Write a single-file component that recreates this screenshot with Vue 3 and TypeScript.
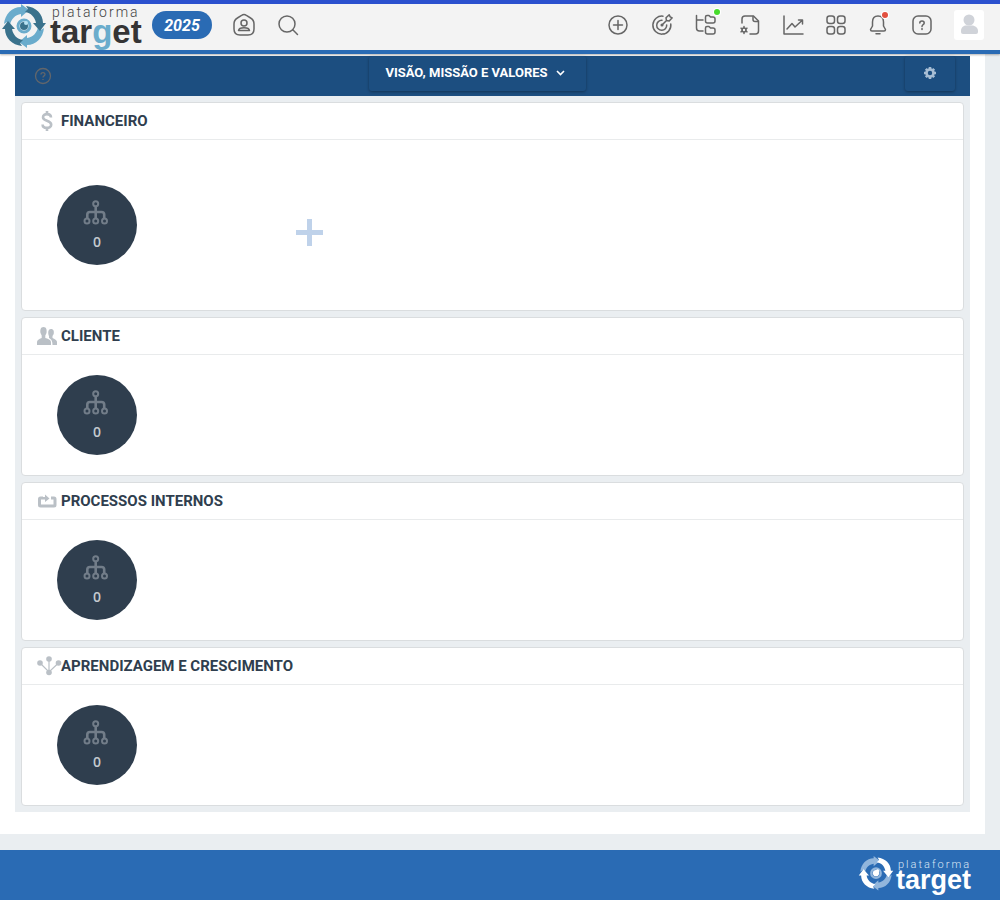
<script setup lang="ts">
type IconName = 'money' | 'people' | 'process' | 'growth'

interface Perspective {
  title: string
  icon: IconName
  count: number
  tall?: boolean
}

const year = '2025'

const perspectives: Perspective[] = [
  { title: 'FINANCEIRO', icon: 'money', count: 0, tall: true },
  { title: 'CLIENTE', icon: 'people', count: 0 },
  { title: 'PROCESSOS INTERNOS', icon: 'process', count: 0 },
  { title: 'APRENDIZAGEM E CRESCIMENTO', icon: 'growth', count: 0 },
]
</script>

<template>
  <div class="page">
    <svg class="defs" width="0" height="0" aria-hidden="true">
      <symbol id="mark" viewBox="0 0 48 46">
        <g class="mark-light">
          <path d="M4 20C5 10 12 3 21 3V0L29 6L21 13V10C15 11 11 15 10 21L7 18Z" />
          <path transform="rotate(180 24 22)" d="M4 20C5 10 12 3 21 3V0L29 6L21 13V10C15 11 11 15 10 21L7 18Z" />
        </g>
        <g class="mark-dark">
          <path transform="rotate(90 24 22)" d="M4 20C5 10 12 3 21 3V0L29 6L21 13V10C15 11 11 15 10 21L7 18Z" />
          <path transform="rotate(270 24 22)" d="M4 20C5 10 12 3 21 3V0L29 6L21 13V10C15 11 11 15 10 21L7 18Z" />
        </g>
        <circle class="eye-ring" cx="24" cy="22" r="6" />
        <circle class="eye-core" cx="24" cy="22" r="4" />
        <circle class="eye-spark" cx="26" cy="19" r="2" />
      </symbol>
    </svg>

    <header class="topbar">
      <a class="logo" href="#" aria-label="plataforma target">
        <svg width="148" height="46" viewBox="0 0 148 46">
          <use href="#mark" x="0" y="0" width="48" height="46" />
          <text class="logo-small" x="52" y="13">plataforma</text>
          <text class="logo-big" x="50" y="39">tar<tspan class="logo-g">g</tspan>et</text>
        </svg>
      </a>
      <button class="year" type="button">{{ year }}</button>
      <nav class="left-nav" aria-label="Principal">
        <button class="icon-btn" type="button" aria-label="Início">
          <svg width="24" height="24" viewBox="0 0 24 24">
            <path d="M9.6 2.4Q12 .8 14.4 2.4L18.600 5Q22 7 22 11V16Q22 22 16 22H8Q2 22 2 16V11Q2 7 5.400 5Z" />
            <circle cx="12" cy="10" r="3" />
            <path d="M6.500 17.500C7 13.800 17 13.800 17.500 17.500Z" />
          </svg>
        </button>
        <button class="icon-btn" type="button" aria-label="Pesquisar">
          <svg width="24" height="24" viewBox="0 0 24 24">
            <circle cx="11" cy="11" r="8" /><path d="M16.800 16.800l4.700 4.700" />
          </svg>
        </button>
      </nav>
      <nav class="right-nav" aria-label="Ferramentas">
        <button class="icon-btn" type="button" aria-label="Adicionar">
          <svg width="24" height="24" viewBox="0 0 24 24">
            <circle cx="12" cy="12" r="9" /><path d="M12 7.500v9M7.500 12h9" />
          </svg>
        </button>
        <button class="icon-btn" type="button" aria-label="Metas">
          <svg width="24" height="24" viewBox="0 0 24 24">
            <path d="M13 3.200A9 9 0 1 0 20.800 11" />
            <path d="M12 7.300A5 5 0 1 0 16.700 12" />
            <path d="M12 12l4.500-4.500M16.500 7.500L16 4.800L19.200 1.800L20.200 3.800L22.200 4.800L19.200 8Z" />
            <circle cx="12" cy="12" r=".8" />
          </svg>
        </button>
        <button class="icon-btn" type="button" aria-label="Estrutura">
          <svg width="24" height="24" viewBox="0 0 24 24">
            <path d="M2.500 2.500V15Q2.500 18 5.500 18H9M2.500 7H9" />
            <path d="M11.500 4Q11.500 2.500 13 2.500H15L16.500 4H19Q21 4 21 6V8Q21 10 19 10H13.500Q11.500 10 11.500 8Z" />
            <path d="M11.500 15Q11.500 13.500 13 13.500H15L16.500 15H19Q21 15 21 17V19Q21 21 19 21H13.500Q11.500 21 11.500 19Z" />
          </svg>
          <span class="dot green"></span>
        </button>
        <button class="icon-btn" type="button" aria-label="Documentos">
          <svg width="24" height="24" viewBox="0 0 24 24">
            <path d="M4 10V6Q4 3 7 3H15.500L20.500 8V18Q20.500 21 17.500 21H12" />
            <path d="M15 3.500V6.500Q15 8.500 17 8.500H20" />
            <circle cx="6" cy="17" r="2" />
            <path d="M6 13.500V15M6 19v1.500M3 15.200l1.300.8M7.700 18l1.300.8M3 18.800l1.300-.8M7.700 16l1.300-.8" />
          </svg>
        </button>
        <button class="icon-btn narrow" type="button" aria-label="Indicadores">
          <svg width="22" height="24" viewBox="0 0 22 24">
            <path d="M2 3V21H21" />
            <path d="M5 16L10 10.500L13 14L20 7.500M16.500 7H20.500V11" />
          </svg>
        </button>
        <button class="icon-btn" type="button" aria-label="Aplicativos">
          <svg width="24" height="24" viewBox="0 0 24 24">
            <rect x="3" y="3" width="7.500" height="7.500" rx="2.500" />
            <rect x="13.500" y="3" width="7.500" height="7.500" rx="2.500" />
            <rect x="3" y="13.500" width="7.500" height="7.500" rx="2.500" />
            <rect x="13.500" y="13.500" width="7.500" height="7.500" rx="2.500" />
          </svg>
        </button>
        <button class="icon-btn narrow" type="button" aria-label="Notificações">
          <svg width="22" height="24" viewBox="0 0 22 24">
            <path d="M10 3C6 3 4.500 6 4.500 9V13L2.500 16.500Q2.500 18 4 18H16Q17.500 18 17.500 16.500L15.500 13V9C15.500 6 14 3 10 3ZM8 20.800h4" />
          </svg>
          <span class="dot red"></span>
        </button>
        <button class="icon-btn" type="button" aria-label="Ajuda">
          <svg width="24" height="24" viewBox="0 0 24 24">
            <rect x="3" y="3" width="18" height="18" rx="5" />
            <path d="M9.800 10C9.800 7.200 14.200 7.200 14.200 10C14.200 11.800 12 11.500 12 13.500M12 15.500V16.500" />
          </svg>
        </button>
        <button class="avatar" type="button" aria-label="Perfil">
          <svg width="30" height="30" viewBox="0 0 30 30">
            <path d="M7 21C7 17 10 15.500 12 15.500H18C20 15.500 24 17 24 21V22Q24 24 22 24H9Q7 24 7 22Z" />
            <circle cx="15" cy="10" r="5.500" />
          </svg>
        </button>
      </nav>
    </header>

    <main class="content">
      <div class="toolbar">
        <button class="help" type="button" aria-label="Ajuda do mapa">
          <svg width="18" height="18" viewBox="0 0 18 18">
            <circle cx="9" cy="9" r="7.500" />
            <path d="M7 7.500C7 5 11 5 11 7.500C11 9 9 8.800 9 10.500M9 12V13" />
          </svg>
        </button>
        <button class="flat vision" type="button">
          VISÃO, MISSÃO E VALORES
          <svg width="9" height="6" viewBox="0 0 9 6"><path d="M1 1l3.500 3.500L8 1" /></svg>
        </button>
        <button class="flat settings" type="button" aria-label="Configurações">
          <svg width="12" height="12" viewBox="0 0 12 12">
            <circle cx="6" cy="6" r="3.500" />
            <path d="M6 0V2M6 10v2M0 6h2M10 6h2M1.800 1.800l1.300 1.300M8.900 8.900l1.300 1.300M1.800 10.200l1.300-1.300M8.900 3.100l1.300-1.300" />
          </svg>
        </button>
      </div>

      <div class="board">
        <section v-for="item in perspectives" :key="item.title" class="card">
          <h2 class="card-title">
            <span class="title-icon">
              <svg v-if="item.icon === 'money'" class="line" width="24" height="22" viewBox="0 0 24 22">
                <path d="M10 1V4M10 18v3M14 7.500C14 3 6 3 6 7.200C6 11.500 14.200 10 14.200 14.700C14.200 19 5.600 19 5.600 14.500" />
              </svg>
              <svg v-else-if="item.icon === 'people'" class="solid" width="24" height="22" viewBox="0 0 24 22">
                <path d="M6.500 2C9.500 2 10 5 9.500 8L8.300 10.500V13C12 14 14 15 14 17V20H0V17C0 15 2 14 4.700 13V10.500L3.500 8C3 5 3.500 2 6.500 2Z" />
                <path d="M14 4C16.800 4 17.200 6.500 16.700 9L15.500 11V13C18.500 14.500 20 15.500 20 17V20H15.500C15.500 16 14.500 14.500 12 13V11C11 9 10.500 4 14 4Z" />
              </svg>
              <svg v-else-if="item.icon === 'process'" width="24" height="22" viewBox="0 0 24 22">
                <path class="loop" d="M6 8H3.500Q2.500 8 2.500 9V15Q2.500 16 3.500 16H17Q18 16 18 15V9Q18 8 17 8H14" />
                <path class="solid" d="M6 7H8V4.500L12.500 8.500L8 12V9.500H6Z" />
              </svg>
              <svg v-else width="24" height="22" viewBox="0 0 24 22">
                <path class="links" d="M3 8L12 17L21.500 8M12 4V17" />
                <g class="solid">
                  <circle cx="3" cy="8" r="2.800" /><circle cx="12" cy="4" r="2.800" />
                  <circle cx="21.500" cy="8" r="2.800" /><circle cx="12" cy="17.500" r="2.800" />
                </g>
              </svg>
            </span>
            {{ item.title }}
          </h2>
          <div class="card-body" :class="{ tall: item.tall }">
            <button class="bubble" type="button">
              <svg width="26" height="26" viewBox="0 0 26 26">
                <circle cx="11.700" cy="3.800" r="2.500" />
                <circle cx="3" cy="21" r="2.500" />
                <circle cx="11.700" cy="21" r="2.500" />
                <circle cx="20.500" cy="21" r="2.500" />
                <path class="branch" d="M11.700 6.500V18.500M3.300 18.500V14.500Q3.300 12 6 12H17.500Q20.200 12 20.200 14.500V18.500" />
              </svg>
              <span>{{ item.count }}</span>
            </button>
            <button v-if="item.tall" class="add" type="button" aria-label="Adicionar objetivo"></button>
          </div>
        </section>
      </div>
    </main>

    <footer class="footer">
      <svg width="116" height="40" viewBox="0 0 116 40" role="img" aria-label="plataforma target">
        <use href="#mark" x="0" y="1" width="38" height="36" />
        <text class="logo-small" x="41" y="13">plataforma</text>
        <text class="logo-big" x="39" y="34">target</text>
      </svg>
    </footer>
  </div>
</template>

<style>
body {
  margin: 0;
  background: #eaeef1;
}
</style>

<style scoped>
.page {
  display: flex;
  flex-direction: column;
  min-height: 100vh;
  font-family: Roboto, "Liberation Sans", sans-serif;
  color: #2f3e4e;
  --light: #6aaccc;
  --dark: #3a728c;
  --spark: #b8e2f2;
}
button {
  font: inherit;
  border: 0;
  padding: 0;
  margin: 0;
  background: none;
  color: inherit;
  cursor: pointer;
}
svg {
  display: block;
  fill: none;
  overflow: visible;
}
.defs {
  position: absolute;
}
.mark-light { fill: var(--light); }
.mark-dark { fill: var(--dark); }
.eye-ring { stroke: var(--light); stroke-width: 3; }
.eye-core { fill: var(--dark); }
.eye-spark { fill: var(--spark); }

.topbar {
  position: relative;
  z-index: 1;
  display: flex;
  align-items: center;
  box-sizing: border-box;
  height: 54px;
  padding: 0 16px 4px 0;
  border-top: 4px solid #2b50ce;
  border-bottom: 4px solid #2a6bb4;
  background: #f3f3f3;
  box-shadow: 0 1px 2px rgba(0, 0, 0, 0.3);
}
.logo {
  align-self: flex-start;
}
.logo-small {
  font: 300 14px Roboto, sans-serif;
  letter-spacing: 2px;
  fill: #444;
}
.logo-big {
  font: bold 33px "Liberation Sans", Arial, sans-serif;
  fill: #353435;
}
.logo-g { fill: var(--light); }
.year {
  width: 60px;
  height: 28px;
  margin-left: 4px;
  border-radius: 14px;
  background: #2a6bb4;
  color: #fff;
  font-size: 16px;
  font-weight: 700;
  font-style: italic;
}
.left-nav,
.right-nav {
  display: flex;
  align-items: center;
  gap: 20px;
}
.left-nav {
  margin-left: 20px;
}
.right-nav {
  margin-left: auto;
}
.icon-btn {
  position: relative;
  width: 24px;
  height: 24px;
}
.icon-btn.narrow {
  width: 22px;
}
.icon-btn svg {
  stroke: #666;
  stroke-width: 1.5;
  stroke-linecap: round;
  stroke-linejoin: round;
}
.dot {
  position: absolute;
  top: -4px;
  right: -2px;
  width: 6px;
  height: 6px;
  border-radius: 50%;
  box-shadow: 0 0 0 1px #fff;
}
.green { background: #47dc2c; }
.red {
  top: -1px;
  right: 2px;
  background: #e2503f;
}
.avatar {
  width: 30px;
  height: 30px;
  border-radius: 3px;
  background: #fff;
}
.avatar svg {
  fill: #d0d3d9;
}

.content {
  flex: 1;
  box-sizing: border-box;
  margin: 0 15px 16px 0;
  padding: 2px 15px 22px;
  background: #fff;
}
.toolbar {
  display: grid;
  grid-template-columns: 1fr auto 1fr;
  align-items: start;
  height: 40px;
  background: #1c4e80;
}
.help {
  margin: 11px 0 0 19px;
  justify-self: start;
}
.help svg {
  stroke: #62666b;
  stroke-width: 1.3;
}
.flat {
  display: flex;
  align-items: center;
  justify-content: center;
  height: 35px;
  border-radius: 3px;
  color: #fff;
  box-shadow: 0 1px 3px rgba(0, 0, 0, 0.35);
}
.vision {
  gap: 8px;
  margin-right: 30px;
  padding: 0 21px 2px 16px;
  font-size: 13px;
  font-weight: 700;
}
.vision svg {
  stroke: #fff;
  stroke-width: 1.6;
}
.settings {
  justify-self: end;
  width: 50px;
  margin-right: 15px;
  padding-bottom: 2px;
}
.settings svg {
  stroke: #a8bed4;
  stroke-width: 2.6;
}

.board {
  display: grid;
  gap: 6px;
  padding: 6px;
  background: #eaeef1;
}
.card {
  border: 1px solid #dadddf;
  border-radius: 4px;
  background: #fff;
}
.card-title {
  display: flex;
  align-items: center;
  height: 36px;
  margin: 0;
  padding-left: 15px;
  border-bottom: 1px solid #e9ebec;
  font-size: 15px;
  font-weight: 700;
}
.title-icon {
  width: 24px;
}
.solid { fill: #bac0c6; }
.line,
.loop,
.links {
  stroke: #bac0c6;
  stroke-width: 2.6;
}
.loop { stroke-width: 3; }
.links { stroke-width: 1.2; }
.card-body {
  display: flex;
  align-items: center;
  height: 120px;
  padding-left: 35px;
}
.card-body.tall {
  height: 170px;
}
.bubble {
  display: flex;
  flex-direction: column;
  align-items: center;
  gap: 6px;
  box-sizing: border-box;
  width: 80px;
  height: 80px;
  padding-top: 15px;
  border-radius: 50%;
  background: #2f3e4e;
  color: #c5cacf;
}
.bubble svg {
  stroke: #727d89;
  stroke-width: 2;
}
.bubble .branch {
  stroke-width: 2.6;
}
.bubble span {
  font: 600 14px/20px "Open Sans", "Noto Sans", sans-serif;
}
.add {
  width: 27px;
  height: 27px;
  margin: 15px 0 0 159px;
  border-radius: 1px;
  background:
    linear-gradient(#bfd2ea, #bfd2ea) center / 27px 5px no-repeat,
    linear-gradient(#bfd2ea, #bfd2ea) center / 5px 27px no-repeat;
}

.footer {
  display: flex;
  align-items: center;
  justify-content: flex-end;
  height: 50px;
  padding-right: 27px;
  background: #2a6bb4;
  --light: #92b6dc;
  --dark: #fff;
  --spark: #fff;
}
.footer .eye-core { fill: none; }
.footer .logo-small {
  font-size: 11px;
  fill: #dbe7f4;
}
.footer .logo-big {
  font-size: 27px;
  fill: #fff;
}
</style>
